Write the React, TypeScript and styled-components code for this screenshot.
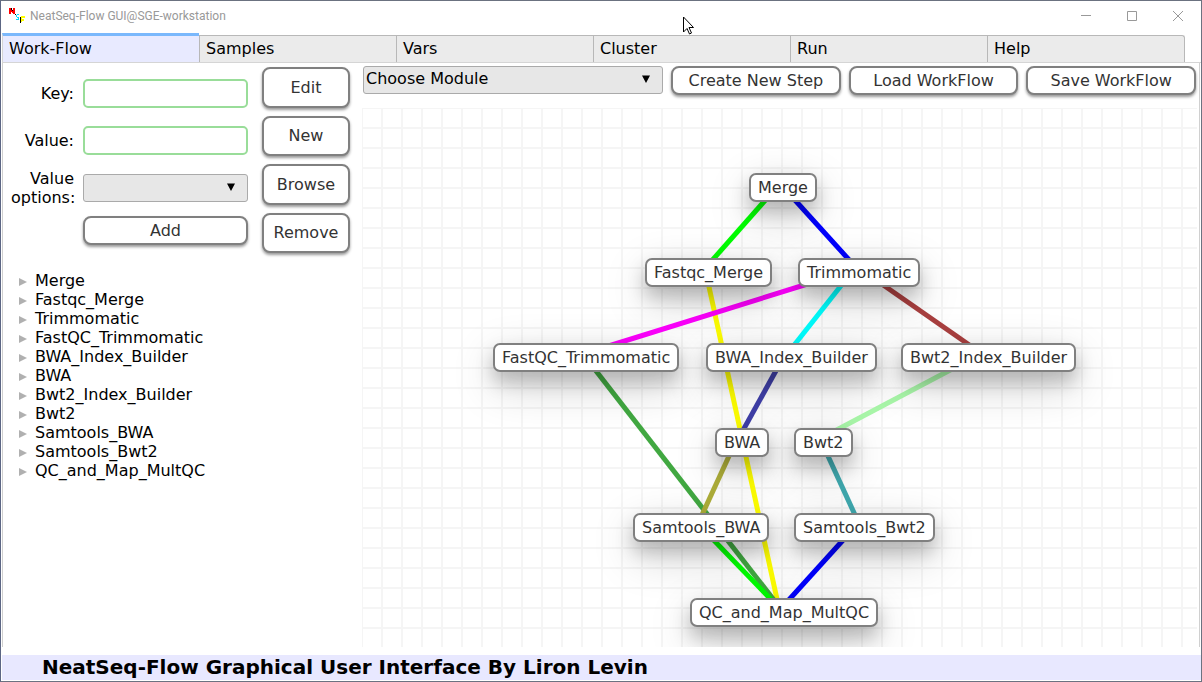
import React from 'react';
import styled, { createGlobalStyle } from 'styled-components';

const GlobalStyle = createGlobalStyle`
  *, *::before, *::after { box-sizing: border-box; }
  body { margin: 0; background: #fff; font: 16px/19px "DejaVu Sans", sans-serif; color: #000; }
  button, input, select { font: inherit; margin: 0; }
`;

const Window = styled.div`
  position: relative;
  display: flex;
  flex-direction: column;
  min-height: 100vh;
  padding: 0 0 1px 1px;
  border: 1px solid #6b7280;
  border-left-color: #5c6684;
  background: #fff;
`;

const TitleBar = styled.header`
  display: flex;
  align-items: center;
  height: 30px;
  padding-left: 6px;
  gap: 4px;
`;

const Title = styled.h1`
  flex: 1;
  margin: 0;
  font: 12px/16px Roboto, sans-serif;
  color: #999;
`;

const WindowButton = styled.button`
  display: flex;
  align-items: center;
  justify-content: center;
  width: 46px;
  height: 28px;
  padding: 0;
  border: 0;
  background: none;
  color: #999;
`;

const WindowControls = styled.div`
  display: flex;
`;

const Tabs = styled.nav`
  display: flex;
  align-items: flex-end;
  padding: 2px 16px 0 0;
  border-bottom: 1px solid #d5d5d5;
`;

const Tab = styled.button<{ $active?: boolean }>`
  flex: 1;
  height: ${(p) => (p.$active ? 29 : 27)}px;
  padding: 0 6px 2px;
  text-align: left;
  color: #000;
  border: 1px solid #b8b8b8;
  border-bottom: 0;
  border-right-width: 0;
  border-top: ${(p) => (p.$active ? '3px solid #7ab8fc' : '1px solid #b8b8b8')};
  background: ${(p) => (p.$active ? '#e8eaff' : '#ebebeb')};
  &:first-child { border-left-color: #d5d5d5; }
  &:last-child { border-right-width: 1px; border-top-right-radius: 3px; }
`;

const Panel = styled.main`
  flex: 1;
  display: flex;
  margin-right: 1px;
  border: solid #d0d0d0;
  border-width: 0 1px;
`;

const Sidebar = styled.section`
  width: 359px;
  flex: none;
  padding: 4px 12px 0 8px;
`;

const Editor = styled.form`
  display: flex;
  justify-content: space-between;
`;

const Fields = styled.div`
  display: grid;
  grid-template-columns: 63px 165px;
  grid-template-rows: 38px 38px 39px 29px;
  align-items: center;
  align-content: start;
  gap: 9px;
  padding-top: 7px;
`;

const Label = styled.label`
  text-align: right;
`;

const TextBox = styled.input`
  width: 100%;
  height: 29px;
  padding: 0 6px;
  border: 2px solid #99dd99;
  border-radius: 5px;
  background: #fff;
`;

const SelectBox = styled.div<{ $wide?: boolean }>`
  position: relative;
  width: ${(p) => (p.$wide ? '300px' : '100%')};
  svg { position: absolute; right: 13px; top: 9px; pointer-events: none; }
`;

const Select = styled.select`
  display: block;
  appearance: none;
  width: 100%;
  height: 28px;
  padding: 0 24px 4px 2px;
  border: 1px solid #aaa;
  border-radius: 3px;
  background: #e7e7e7;
  color: #000;
`;

const Button = styled.button`
  padding: 0 4px;
  min-height: 29px;
  border: 2px solid #808080;
  border-radius: 8px;
  background: #fff;
  color: #333;
  white-space: nowrap;
  box-shadow: 0 2px 3px rgba(0, 0, 0, 0.4);
`;

const AddButton = styled(Button)`
  grid-column: 2;
`;

const Actions = styled.div`
  display: grid;
  grid-template-rows: repeat(4, 1fr);
  gap: 8px;
  width: 88px;
  height: 186px;
`;

const StepList = styled.ul`
  margin: 18px 0 0;
  padding: 0 0 0 8px;
  list-style: none;
`;

const StepButton = styled.button`
  display: flex;
  align-items: center;
  gap: 8px;
  padding: 0;
  border: 0;
  background: none;
  color: #000;
  svg { margin-top: 2px; }
`;

const Workspace = styled.section`
  flex: 1;
  min-width: 0;
  display: flex;
  flex-direction: column;
`;

const Toolbar = styled.div`
  display: flex;
  gap: 8px;
  padding: 3px 3px 0 1px;
  > button { flex: 1; }
`;

const Canvas = styled.div`
  position: relative;
  flex: 1;
  min-height: 539px;
  margin: 13px 2px 0 0;
  overflow: hidden;
  background:
    linear-gradient(#f5f5f5 2px, transparent 2px) -1px -1px / 20px 20px,
    linear-gradient(90deg, #f5f5f5 2px, transparent 2px) -1px -1px / 20px 20px;
`;

const Edges = styled.svg`
  position: absolute;
  inset: 0;
  width: 100%;
  height: 100%;
`;

const Node = styled.div<{ $x: number; $y: number }>`
  position: absolute;
  left: ${(p) => p.$x}px;
  top: ${(p) => p.$y}px;
  height: 29px;
  padding: 3px 7px;
  border: 2px solid #808080;
  border-radius: 7px;
  background: #fff;
  color: #333;
  white-space: nowrap;
  box-shadow: 0 14px 45px rgba(0, 0, 0, 0.2), 0 10px 18px rgba(0, 0, 0, 0.22);
`;

const Footer = styled.footer`
  height: 25px;
  margin-top: 8px;
  padding-left: 40px;
  background: #e8e8ff;
  font-size: 20px;
  line-height: 24px;
  font-weight: bold;
`;

const Cursor = styled.svg`
  position: absolute;
  left: 681px;
  top: 15px;
  pointer-events: none;
`;

const tabs = ['Work-Flow', 'Samples', 'Vars', 'Cluster', 'Run', 'Help'];

const steps = [
  { name: 'Merge', x: 387, y: 65 },
  { name: 'Fastqc_Merge', x: 283, y: 150 },
  { name: 'Trimmomatic', x: 436, y: 150 },
  { name: 'FastQC_Trimmomatic', x: 131, y: 235 },
  { name: 'BWA_Index_Builder', x: 344, y: 235 },
  { name: 'BWA', x: 353, y: 320 },
  { name: 'Bwt2_Index_Builder', x: 539, y: 235 },
  { name: 'Bwt2', x: 432, y: 320 },
  { name: 'Samtools_BWA', x: 271, y: 405 },
  { name: 'Samtools_Bwt2', x: 432, y: 405 },
  { name: 'QC_and_Map_MultQC', x: 328, y: 490 },
];

const edges = [
  { from: [414, 80], to: [339, 165], color: '#00ff00' },
  { from: [422, 80], to: [499, 165], color: '#0000ff' },
  { from: [344, 165], to: [418, 505], color: '#ffff00' },
  { from: [481, 165], to: [208, 250], color: '#ff00ff' },
  { from: [489, 165], to: [422, 250], color: '#00ffff' },
  { from: [504, 165], to: [626, 250], color: '#aa4040' },
  { from: [224, 250], to: [422, 505], color: '#41a841' },
  { from: [421, 250], to: [374, 335], color: '#4040aa' },
  { from: [611, 250], to: [450, 335], color: '#aaf8aa' },
  { from: [373, 335], to: [334, 420], color: '#afaf3a' },
  { from: [460, 335], to: [499, 420], color: '#40aab0' },
  { from: [340, 420], to: [422, 505], color: '#00ff00' },
  { from: [492, 420], to: [415, 505], color: '#0000ff' },
];

const DownArrow = () => (
  <svg width="8" height="8" viewBox="0 0 8 8" aria-hidden="true">
    <path d="M0 0.5h8L4 8z" fill="#000" />
  </svg>
);

const Logo = () => (
  <svg width="18" height="18" viewBox="0 0 18 18" shapeRendering="crispEdges" aria-hidden="true">
    <path d="M1 1h2v6H1zM3 3h1v2H3zM4 4h1v2H4zM5 1h2v6H5z" fill="#f00" />
    <path d="M3 1h1v2H3zM4 3h1v1H4zM7 7h1v1H7z" fill="#000" />
    <path d="M9 7h2v1H9zM8 8h1v2H8zM9 10h2v1H9zM10 11h1v1H10zM8 12h3v1H8z" fill="#0df" />
    <path d="M12 10h1v6H12z" fill="#000" />
    <path d="M13 9h4v2H13zM13 11h1v4H13zM14 12h2v2H14z" fill="#ff0" />
  </svg>
);

export default function App() {
  return (
    <Window>
      <GlobalStyle />
      <TitleBar>
        <Logo />
        <Title>NeatSeq-Flow GUI@SGE-workstation</Title>
        <WindowControls>
          <WindowButton aria-label="Minimize">
            <svg width="11" height="11"><path d="M0 4.5h10" stroke="currentColor" /></svg>
          </WindowButton>
          <WindowButton aria-label="Maximize">
            <svg width="11" height="11"><path d="M.5.5h9v9H.5z" fill="none" stroke="currentColor" /></svg>
          </WindowButton>
          <WindowButton aria-label="Close">
            <svg width="11" height="11"><path d="M0 0l10 10M10 0l-10 10" stroke="currentColor" /></svg>
          </WindowButton>
        </WindowControls>
      </TitleBar>
      <Tabs>
        {tabs.map((name, i) => (
          <Tab key={name} $active={i === 0}>{name}</Tab>
        ))}
      </Tabs>
      <Panel>
        <Sidebar>
          <Editor onSubmit={(e) => e.preventDefault()}>
            <Fields>
              <Label htmlFor="key">Key:</Label>
              <TextBox id="key" />
              <Label htmlFor="value">Value:</Label>
              <TextBox id="value" />
              <Label htmlFor="options">Value options:</Label>
              <SelectBox>
                <Select id="options" />
                <DownArrow />
              </SelectBox>
              <AddButton type="button">Add</AddButton>
            </Fields>
            <Actions>
              <Button type="button">Edit</Button>
              <Button type="button">New</Button>
              <Button type="button">Browse</Button>
              <Button type="button">Remove</Button>
            </Actions>
          </Editor>
          <StepList>
            {steps.map((step) => (
              <li key={step.name}>
                <StepButton>
                  <svg width="8" height="8" viewBox="0 0 8 8" aria-hidden="true">
                    <path d="M0 0l8 4-8 4z" fill="#b0b0b0" />
                  </svg>
                  {step.name}
                </StepButton>
              </li>
            ))}
          </StepList>
        </Sidebar>
        <Workspace>
          <Toolbar>
            <SelectBox $wide>
              <Select aria-label="Module" defaultValue="">
                <option value="">Choose Module</option>
              </Select>
              <DownArrow />
            </SelectBox>
            <Button>Create New Step</Button>
            <Button>Load WorkFlow</Button>
            <Button>Save WorkFlow</Button>
          </Toolbar>
          <Canvas>
            <Edges aria-hidden="true">
              {edges.map(({ from, to, color }, i) => (
                <line key={i} x1={from[0]} y1={from[1]} x2={to[0]} y2={to[1]} stroke={color} strokeWidth="5" />
              ))}
            </Edges>
            {steps.map((step) => (
              <Node key={step.name} $x={step.x} $y={step.y}>{step.name}</Node>
            ))}
          </Canvas>
        </Workspace>
      </Panel>
      <Footer>NeatSeq-Flow Graphical User Interface By Liron Levin</Footer>
      <Cursor width="12" height="20" viewBox="0 0 12 20" aria-hidden="true">
        <path d="M1.5 1v15l3.5-3.500 2.500 5.500 2-1-2.500-5.500h4.500z" fill="#fff" stroke="#000" />
      </Cursor>
    </Window>
  );
}
